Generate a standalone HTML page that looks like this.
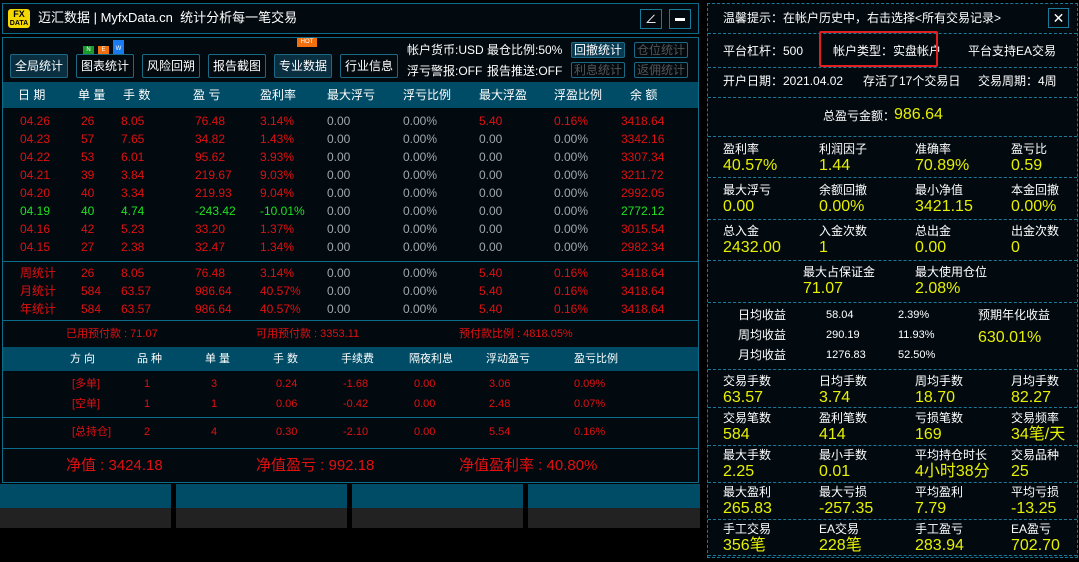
<!DOCTYPE html>
<html><head><meta charset="utf-8">
<style>
*{margin:0;padding:0;box-sizing:border-box}
body{width:1079px;height:562px;background:#000;font-family:"Liberation Sans","Noto Sans CJK SC",sans-serif;color:#fff;position:relative;overflow:hidden;font-size:12px}
.a{position:absolute;white-space:nowrap;line-height:14px}
.box{position:absolute;border:1px solid #0b6c8c;background:#020a10}
.btn{position:absolute;border:1px solid #1a6a86;background:#020a10;color:#fff;font-size:12px;text-align:center;line-height:22px;height:24px;border-radius:2px}
.hdr{position:absolute;background:#004c66;}
.r{color:#e01010}.g{color:#20e020}.gr{color:#a0a8b0}
.y{color:#e6f000}
.v{line-height:18px!important}
.dl{position:absolute;left:708px;width:369px;border-top:1px dashed #1a7a9a}
</style></head><body>
<div class="box" style="left:2px;top:3px;width:697px;height:31px"></div>
<div class="a" style="left:8px;top:9px;width:22px;height:19px;background:#f5d800;border-radius:3px;color:#000;font-weight:bold;font-size:9px;line-height:8px;text-align:center;padding-top:1px">FX<br><span style="font-size:7px">DATA</span></div>
<div class="a" style="left:38px;top:11px;font-size:13px">迈汇数据 | MyfxData.cn&nbsp; 统计分析每一笔交易</div>
<div class="a" style="left:640px;top:9px;width:22px;height:20px;border:1px solid #1a7a9a;color:#fff;text-align:center;line-height:18px">∠</div>
<div class="a" style="left:669px;top:9px;width:22px;height:20px;border:1px solid #1a7a9a"><div style="position:absolute;left:5px;top:8px;width:10px;height:3px;background:#fff"></div></div>
<div class="box" style="left:2px;top:37px;width:697px;height:446px"></div>
<div class="btn" style="left:10px;top:54px;width:58px;background:#0a2f40">全局统计</div>
<div class="btn" style="left:76px;top:54px;width:58px">图表统计</div>
<div class="a" style="left:83px;top:46px;width:11px;height:8px;background:#1a9a2a;font-size:6px;text-align:center;line-height:8px">N</div>
<div class="a" style="left:98px;top:46px;width:11px;height:8px;background:#f07010;font-size:6px;text-align:center;line-height:8px">E</div>
<div class="a" style="left:113px;top:40px;width:11px;height:14px;background:#1a7af0;font-size:6px;text-align:center;line-height:18px">W</div>
<div class="btn" style="left:142px;top:54px;width:58px">风险回朔</div>
<div class="btn" style="left:208px;top:54px;width:58px">报告截图</div>
<div class="btn" style="left:274px;top:54px;width:58px;background:#0a2f40">专业数据</div>
<div class="a" style="left:297px;top:38px;width:20px;height:9px;background:#f07010;font-size:6px;text-align:center;line-height:9px">HOT</div>
<div class="btn" style="left:340px;top:54px;width:58px">行业信息</div>
<div class="a" style="left:407px;top:43px">帐户货币:USD</div>
<div class="a" style="left:487px;top:43px">最仓比例:50%</div>
<div class="a" style="left:407px;top:64px">浮亏警报:OFF</div>
<div class="a" style="left:487px;top:64px">报告推送:OFF</div>
<div class="btn" style="left:571px;top:42px;width:54px;height:16px;line-height:14px;background:#0a3a52">回撤统计</div>
<div class="btn" style="left:634px;top:42px;width:54px;height:16px;line-height:14px;color:#555">仓位统计</div>
<div class="btn" style="left:571px;top:62px;width:54px;height:16px;line-height:14px;color:#555">利息统计</div>
<div class="btn" style="left:634px;top:62px;width:54px;height:16px;line-height:14px;color:#555">返佣统计</div>
<div class="hdr" style="left:3px;top:82px;width:695px;height:26px"></div>
<div class="a" style="top:88px;left:0;font-size:12px">
<span class="a" style="left:18px">日 期</span><span class="a" style="left:78px">单 量</span><span class="a" style="left:123px">手 数</span><span class="a" style="left:193px">盈 亏</span><span class="a" style="left:260px">盈利率</span><span class="a" style="left:327px">最大浮亏</span><span class="a" style="left:403px">浮亏比例</span><span class="a" style="left:479px">最大浮盈</span><span class="a" style="left:554px">浮盈比例</span><span class="a" style="left:630px">余 额</span></div>
<div id="rows"></div>
<div class="a" style="left:3px;top:261px;width:695px;border-top:1px solid #0b6c8c"></div>
<div class="a" style="left:3px;top:320px;width:695px;border-top:1px solid #0b6c8c"></div>
<div class="a r" style="left:66px;top:327px;font-size:11px">已用预付款 : 71.07</div>
<div class="a r" style="left:256px;top:327px;font-size:11px">可用预付款 : 3353.11</div>
<div class="a r" style="left:459px;top:327px;font-size:11px">预付款比例 : 4818.05%</div>
<div class="hdr" style="left:3px;top:347px;width:695px;height:24px"></div>
<div class="a" style="top:352px;left:0;font-size:11px">
<span class="a" style="left:70px">方 向</span><span class="a" style="left:137px">品 种</span><span class="a" style="left:205px">单 量</span><span class="a" style="left:273px">手 数</span><span class="a" style="left:341px">手续费</span><span class="a" style="left:409px">隔夜利息</span><span class="a" style="left:486px">浮动盈亏</span><span class="a" style="left:574px">盈亏比例</span></div>
<div class="a r" style="top:377px;left:0;font-size:11px">
<span class="a" style="left:72px">[多单]</span><span class="a" style="left:144px">1</span><span class="a" style="left:211px">3</span><span class="a" style="left:276px">0.24</span><span class="a" style="left:343px">-1.68</span><span class="a" style="left:414px">0.00</span><span class="a" style="left:489px">3.06</span><span class="a" style="left:574px">0.09%</span></div>
<div class="a r" style="top:397px;left:0;font-size:11px">
<span class="a" style="left:72px">[空单]</span><span class="a" style="left:144px">1</span><span class="a" style="left:211px">1</span><span class="a" style="left:276px">0.06</span><span class="a" style="left:343px">-0.42</span><span class="a" style="left:414px">0.00</span><span class="a" style="left:489px">2.48</span><span class="a" style="left:574px">0.07%</span></div>
<div class="a" style="left:3px;top:417px;width:695px;border-top:1px solid #0b6c8c"></div>
<div class="a r" style="top:425px;left:0;font-size:11px">
<span class="a" style="left:72px">[总持仓]</span><span class="a" style="left:144px">2</span><span class="a" style="left:211px">4</span><span class="a" style="left:276px">0.30</span><span class="a" style="left:343px">-2.10</span><span class="a" style="left:414px">0.00</span><span class="a" style="left:489px">5.54</span><span class="a" style="left:574px">0.16%</span></div>
<div class="a" style="left:3px;top:448px;width:695px;border-top:1px solid #0b6c8c"></div>
<div class="a r" style="left:66px;top:457px;font-size:15px;line-height:18px">净值 : 3424.18</div>
<div class="a r" style="left:256px;top:457px;font-size:15px;line-height:18px">净值盈亏 : 992.18</div>
<div class="a r" style="left:459px;top:457px;font-size:15px;line-height:18px">净值盈利率 : 40.80%</div>
<div class="a" style="left:0;top:484px;width:171px;height:24px;background:#004c66"></div><div class="a" style="left:0;top:508px;width:171px;height:20px;background:#222"></div>
<div class="a" style="left:176px;top:484px;width:171px;height:24px;background:#004c66"></div><div class="a" style="left:176px;top:508px;width:171px;height:20px;background:#222"></div>
<div class="a" style="left:352px;top:484px;width:171px;height:24px;background:#004c66"></div><div class="a" style="left:352px;top:508px;width:171px;height:20px;background:#222"></div>
<div class="a" style="left:528px;top:484px;width:172px;height:24px;background:#004c66"></div><div class="a" style="left:528px;top:508px;width:172px;height:20px;background:#222"></div>
<div class="a" style="left:707px;top:3px;width:371px;height:555px;border:1px dashed #1a7a9a;background:#020a10"></div>
<div class="a" style="left:723px;top:11px">温馨提示：在帐户历史中，右击选择&lt;所有交易记录&gt;</div>
<div class="a" style="left:1048px;top:8px;width:21px;height:20px;border:1px solid #1a7a9a;text-align:center;line-height:18px;font-size:14px">✕</div>
<div class="dl" style="top:33px"></div>
<div class="a" style="left:723px;top:44px">平台杠杆：500</div>
<div class="a" style="left:833px;top:44px">帐户类型：实盘帐户</div>
<div class="a" style="left:819px;top:31px;width:119px;height:36px;border:2px solid #e02020;border-radius:2px"></div>
<div class="a" style="left:968px;top:44px">平台支持EA交易</div>
<div class="dl" style="top:67px"></div>
<div class="a" style="left:723px;top:74px">开户日期：2021.04.02</div>
<div class="a" style="left:863px;top:74px">存活了17个交易日</div>
<div class="a" style="left:978px;top:74px">交易周期：4周</div>
<div class="dl" style="top:97px"></div>
<div class="a" style="left:823px;top:109px">总盈亏金额：</div>
<div class="a y v" style="left:894px;top:106px;font-size:16px">986.64</div>
<div class="dl" style="top:136px"></div>
<div id="rp"></div>
<script>
var rows=[
['r','04.26','26','8.05','76.48','3.14%','0.00','0.00%','5.40','0.16%','3418.64'],
['r','04.23','57','7.65','34.82','1.43%','0.00','0.00%','0.00','0.00%','3342.16'],
['r','04.22','53','6.01','95.62','3.93%','0.00','0.00%','0.00','0.00%','3307.34'],
['r','04.21','39','3.84','219.67','9.03%','0.00','0.00%','0.00','0.00%','3211.72'],
['r','04.20','40','3.34','219.93','9.04%','0.00','0.00%','0.00','0.00%','2992.05'],
['g','04.19','40','4.74','-243.42','-10.01%','0.00','0.00%','0.00','0.00%','2772.12'],
['r','04.16','42','5.23','33.20','1.37%','0.00','0.00%','0.00','0.00%','3015.54'],
['r','04.15','27','2.38','32.47','1.34%','0.00','0.00%','0.00','0.00%','2982.34'],
['r','周统计','26','8.05','76.48','3.14%','0.00','0.00%','5.40','0.16%','3418.64'],
['r','月统计','584','63.57','986.64','40.57%','0.00','0.00%','5.40','0.16%','3418.64'],
['r','年统计','584','63.57','986.64','40.57%','0.00','0.00%','5.40','0.16%','3418.64']];
var xs=[20,81,121,195,260,327,403,479,554,621];
var h='';
rows.forEach(function(r,i){var y=i<8?114+i*18:266+(i-8)*18;
for(var j=1;j<11;j++){var c=r[0];
if(j==6||j==7)c='gr';
if((j==8||j==9)&&r[8]=='0.00')c='gr';
h+='<div class="a '+c+'" style="left:'+xs[j-1]+'px;top:'+y+'px;font-size:12px">'+r[j]+'</div>';}});
document.getElementById('rows').innerHTML=h;
var cx=[723,819,915,1011];
function blk(y,items){var s='';items.forEach(function(it,i){if(!it)return;var x=it[2]||cx[i];
s+='<div class="a" style="left:'+x+'px;top:'+y+'px">'+it[0]+'</div><div class="a y v" style="left:'+x+'px;top:'+(y+15)+'px;font-size:16px">'+it[1]+'</div>';});return s;}
var s='';
s+=blk(142,[['盈利率','40.57%'],['利润因子','1.44'],['准确率','70.89%'],['盈亏比','0.59']]);
s+='<div class="dl" style="top:177px"></div>';
s+=blk(183,[['最大浮亏','0.00'],['余额回撤','0.00%'],['最小净值','3421.15'],['本金回撤','0.00%']]);
s+='<div class="dl" style="top:219px"></div>';
s+=blk(224,[['总入金','2432.00'],['入金次数','1'],['总出金','0.00'],['出金次数','0']]);
s+='<div class="dl" style="top:260px"></div>';
s+=blk(265,[null,['最大占保证金','71.07',803],['最大使用仓位','2.08%',915]]);
s+='<div class="dl" style="top:302px"></div>';
var av=[['日均收益','58.04','2.39%'],['周均收益','290.19','11.93%'],['月均收益','1276.83','52.50%']];
av.forEach(function(a,i){var y=308+i*20;s+='<div class="a" style="left:738px;top:'+y+'px">'+a[0]+'</div><div class="a" style="left:826px;top:'+y+'px;font-size:11px">'+a[1]+'</div><div class="a" style="left:898px;top:'+y+'px;font-size:11px">'+a[2]+'</div>';});
s+='<div class="a" style="left:978px;top:308px">预期年化收益</div><div class="a y v" style="left:978px;top:329px;font-size:16px">630.01%</div>';
s+='<div class="dl" style="top:369px"></div>';
s+=blk(374,[['交易手数','63.57'],['日均手数','3.74'],['周均手数','18.70'],['月均手数','82.27']]);
s+='<div class="dl" style="top:407px"></div>';
s+=blk(411,[['交易笔数','584'],['盈利笔数','414'],['亏损笔数','169'],['交易频率','34笔/天']]);
s+='<div class="dl" style="top:445px"></div>';
s+=blk(448,[['最大手数','2.25'],['最小手数','0.01'],['平均持仓时长','4小时38分'],['交易品种','25']]);
s+='<div class="dl" style="top:482px"></div>';
s+=blk(485,[['最大盈利','265.83'],['最大亏损','-257.35'],['平均盈利','7.79'],['平均亏损','-13.25']]);
s+='<div class="dl" style="top:519px"></div>';
s+=blk(522,[['手工交易','356笔'],['EA交易','228笔'],['手工盈亏','283.94'],['EA盈亏','702.70']]);
s+='<div class="dl" style="top:555px"></div>';
document.getElementById('rp').innerHTML=s;
</script>
</body></html>
